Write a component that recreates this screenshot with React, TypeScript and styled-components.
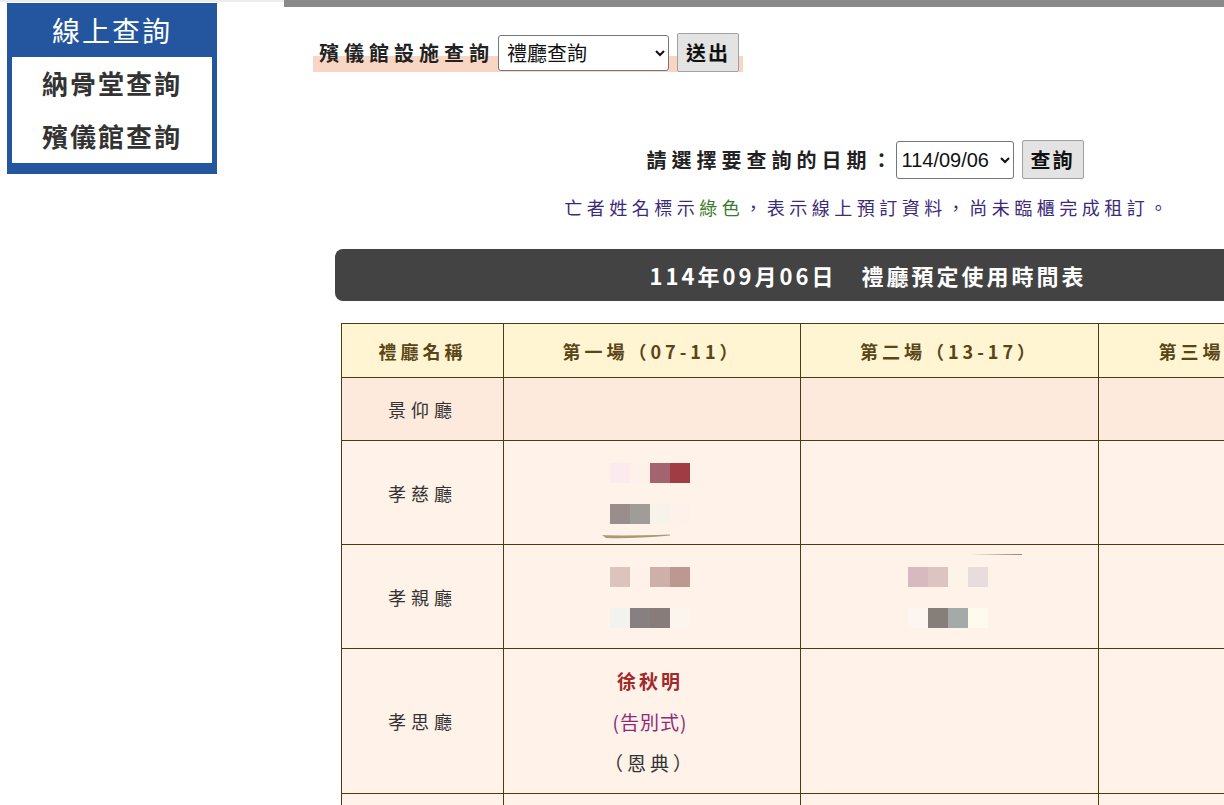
import React from "react";
import styled, {createGlobalStyle} from "styled-components";

const GlobalStyle = createGlobalStyle`
  html, body {
    margin: 0;
    padding: 0;
    overflow: hidden;
    background: #ffffff;
  }
  body {
    font-family: "Noto Sans CJK TC", "Noto Sans", sans-serif;
    color: #333;
  }
`;

const Page = styled.div`
  display: flex;
  align-items: flex-start;
  width: 1420px;
`;

const Sidebar = styled.aside`
  flex: none;
  width: 284px;
  border-top: 2px solid #ececec;
  padding: 1px 0 0 7px;
  box-sizing: border-box;
`;

const MenuBox = styled.nav`
  width: 210px;
  background: #2456a0;
  padding: 0 5px 11px;
  box-sizing: border-box;
`;

const MenuTitle = styled.div`
  height: 54px;
  line-height: 54px;
  text-align: center;
  color: #fff;
  font-size: 28px;
  letter-spacing: 2px;
`;

const MenuList = styled.ul`
  list-style: none;
  margin: 0;
  padding: 0;
  background: #fff;
`;

const MenuItem = styled.li`
  height: 53px;
  line-height: 52px;
  text-align: center;
  font-size: 26px;
  font-weight: 700;
  letter-spacing: 2px;
  color: #333;
`;

const Main = styled.main`
  flex: none;
  width: 1130px;
  border-top: 7px solid #8a8a8a;
  padding: 0 0 0 29px;
  box-sizing: border-box;
`;

const FacilityForm = styled.form`
  display: inline-flex;
  align-items: center;
  gap: 8px;
  margin-top: 26px;
  padding: 0 4px 0 6px;
  background: linear-gradient(transparent 58%, #f9d6c3 58%);
`;

const Label = styled.span<{ $gap?: number }>`
  font-size: 20px;
  font-weight: 700;
  letter-spacing: 5px;
  color: #222;
  margin-right: ${p => p.$gap ?? 0}px;
`;

const Select = styled.select<{ $w: number }>`
  width: ${p => p.$w}px;
  height: 36px;
  font-size: 20px;
  font-family: "Noto Sans CJK TC", sans-serif;
  border: 1px solid #767676;
  border-radius: 3px;
  background: #fff;
  color: #111;
  padding: 0 4px;
`;

const DateSelect = styled(Select)`
  font-family: "Liberation Sans", Arial, sans-serif;
  height: 38px;
  padding: 0 1px;
`;

const Button = styled.button`
  height: 39px;
  padding: 0 8px;
  font-size: 20px;
  font-weight: 700;
  letter-spacing: 2px;
  font-family: "Noto Sans CJK TC", sans-serif;
  color: #111;
  background: #e3e3e3;
  border: 1px solid #a0a0a0;
  border-radius: 2px;
`;

const Content = styled.section`
  width: 1066px;
  margin-left: 22px;
`;

const DateForm = styled.form`
  display: flex;
  justify-content: center;
  align-items: center;
  gap: 8px;
  margin-top: 68px;
  padding-right: 6px;
`;

const Notice = styled.p`
  margin: 15px 0 0;
  text-align: center;
  font-size: 18px;
  letter-spacing: 4.5px;
  color: #3b2b78;
`;

const Green = styled.span`
  color: #3a7a2c;
`;

const TitleBar = styled.h2`
  margin: 29px 0 0;
  height: 52px;
  line-height: 52px;
  border-radius: 8px;
  background: #434343;
  color: #fff;
  text-align: center;
  font-size: 22px;
  font-weight: 700;
  letter-spacing: 3px;
`;

const Table = styled.table`
  width: 1052px;
  margin: 22px 0 0 6px;
  border-collapse: collapse;
  table-layout: fixed;
`;

const HeadCell = styled.th<{ $w: number }>`
  width: ${p => p.$w}px;
  height: 53px;
  padding: 0;
  background: #fff5d3;
  border: 1px solid #4b3a12;
  color: #5a4516;
  font-size: 18px;
  font-weight: 700;
  letter-spacing: 4px;
  white-space: nowrap;
`;

const Row = styled.tr<{ $tint?: boolean }>`
  background: ${p => (p.$tint ? "#fdeadd" : "#fff2e9")};
`;

const Cell = styled.td`
  padding: 11px 0 10px;
  border: 1px solid #4b3a12;
  text-align: center;
  vertical-align: middle;
  font-size: 18px;
  line-height: 41px;
  letter-spacing: 5px;
  color: #333;
`;

const SlotStack = styled.div`
  position: relative;
  display: inline-flex;
  flex-direction: column;
  align-items: center;
  margin-right: 4px;
`;

const Line = styled.div`
  height: 41px;
  display: flex;
  align-items: center;
  justify-content: center;
`;

const Mosaic = styled.div`
  display: flex;
`;

const Pixel = styled.span`
  width: 20px;
  height: 20px;
`;

const Stroke = styled.svg<{ $top: number; $left: number }>`
  position: absolute;
  top: ${p => p.$top}px;
  left: ${p => p.$left}px;
`;

const Deceased = styled.span`
  font-size: 19px;
  font-weight: 700;
  letter-spacing: 3px;
  color: #a02a2a;
`;

const Ceremony = styled.span`
  font-size: 19px;
  letter-spacing: 1px;
  color: #8c2a78;
`;

const Plain = styled.span`
  font-size: 19px;
  letter-spacing: 4px;
  color: #333;
`;

const Blur = ({colors}: { colors: string[] }) => (
    <Line>
        <Mosaic>
            {colors.map((c, i) => <Pixel key={i} style={{background: c}}/>)}
        </Mosaic>
    </Line>
);

const halls = ["景仰廳", "孝慈廳", "孝親廳", "孝思廳", "孝愛廳"];

export default function App() {
    return (
        <>
            <GlobalStyle/>
            <Page>
                <Sidebar>
                    <MenuBox>
                        <MenuTitle>線上查詢</MenuTitle>
                        <MenuList>
                            <MenuItem>納骨堂查詢</MenuItem>
                            <MenuItem>殯儀館查詢</MenuItem>
                        </MenuList>
                    </MenuBox>
                </Sidebar>

                <Main>
                    <FacilityForm onSubmit={e => e.preventDefault()}>
                        <Label $gap={-4}>殯儀館設施查詢</Label>
                        <Select $w={171} defaultValue="hall">
                            <option value="hall">禮廳查詢</option>
                            <option value="room">靈堂查詢</option>
                        </Select>
                        <Button type="submit">送出</Button>
                    </FacilityForm>

                    <Content>
                        <DateForm onSubmit={e => e.preventDefault()}>
                            <Label $gap={-9}>請選擇要查詢的日期：</Label>
                            <DateSelect $w={118} defaultValue="114/09/06">
                                <option>114/09/06</option>
                                <option>114/09/07</option>
                            </DateSelect>
                            <Button type="submit">查詢</Button>
                        </DateForm>

                        <Notice>
                            亡者姓名標示<Green>綠色</Green>，表示線上預訂資料，尚未臨櫃完成租訂。
                        </Notice>

                        <TitleBar>114年09月06日　禮廳預定使用時間表</TitleBar>

                        <Table>
                            <thead>
                            <tr>
                                <HeadCell $w={161}>禮廳名稱</HeadCell>
                                <HeadCell $w={296}>第一場（07-11）</HeadCell>
                                <HeadCell $w={297}>第二場（13-17）</HeadCell>
                                <HeadCell $w={298}>第三場（18-22）</HeadCell>
                            </tr>
                            </thead>
                            <tbody>
                            <Row $tint>
                                <Cell>{halls[0]}</Cell>
                                <Cell/>
                                <Cell/>
                                <Cell/>
                            </Row>
                            <Row>
                                <Cell>{halls[1]}</Cell>
                                <Cell>
                                    <SlotStack>
                                        <Blur colors={["#fcebec", "#fdf1ea", "#a3646f", "#a03c44"]}/>
                                        <Blur colors={["#9a8e8d", "#a09d98", "#f8f3ea", "#fdf1ea"]}/>
                                        <Stroke $top={82} $left={-8} width="70" height="5" viewBox="0 0 70 5">
                                            <path d="M0 1 Q20 2 68 0.5 L68 1.5 Q30 5 4 4 Z" fill="#a89a72"/>
                                        </Stroke>
                                    </SlotStack>
                                </Cell>
                                <Cell/>
                                <Cell/>
                            </Row>
                            <Row>
                                <Cell>{halls[2]}</Cell>
                                <Cell>
                                    <SlotStack>
                                        <Blur colors={["#dcc4bc", "#fdf1ea", "#cdb0aa", "#bd9890"]}/>
                                        <Blur colors={["#f2f2ee", "#878080", "#877c7a", "#fbf5ee"]}/>
                                    </SlotStack>
                                </Cell>
                                <Cell>
                                    <SlotStack>
                                        <Blur colors={["#d6bac0", "#dcc4c0", "#fdf4e8", "#e8dcdc"]}/>
                                        <Blur colors={["#fdf5f0", "#867e78", "#a4aaa8", "#fffaee"]}/>
                                        <Stroke $top={-3} $left={62} width="52" height="3" viewBox="0 0 52 3">
                                            <path d="M0 1.5 L52 1 L52 2 Z" fill="#9a8c6c"/>
                                        </Stroke>
                                    </SlotStack>
                                </Cell>
                                <Cell/>
                            </Row>
                            <Row>
                                <Cell>{halls[3]}</Cell>
                                <Cell>
                                    <SlotStack>
                                        <Line><Deceased>徐秋明</Deceased></Line>
                                        <Line><Ceremony>(告別式)</Ceremony></Line>
                                        <Line><Plain>（恩典）</Plain></Line>
                                    </SlotStack>
                                </Cell>
                                <Cell/>
                                <Cell/>
                            </Row>
                            <Row>
                                <Cell>{halls[4]}</Cell>
                                <Cell/>
                                <Cell/>
                                <Cell/>
                            </Row>
                            </tbody>
                        </Table>
                    </Content>
                </Main>
            </Page>
        </>
    );
}
